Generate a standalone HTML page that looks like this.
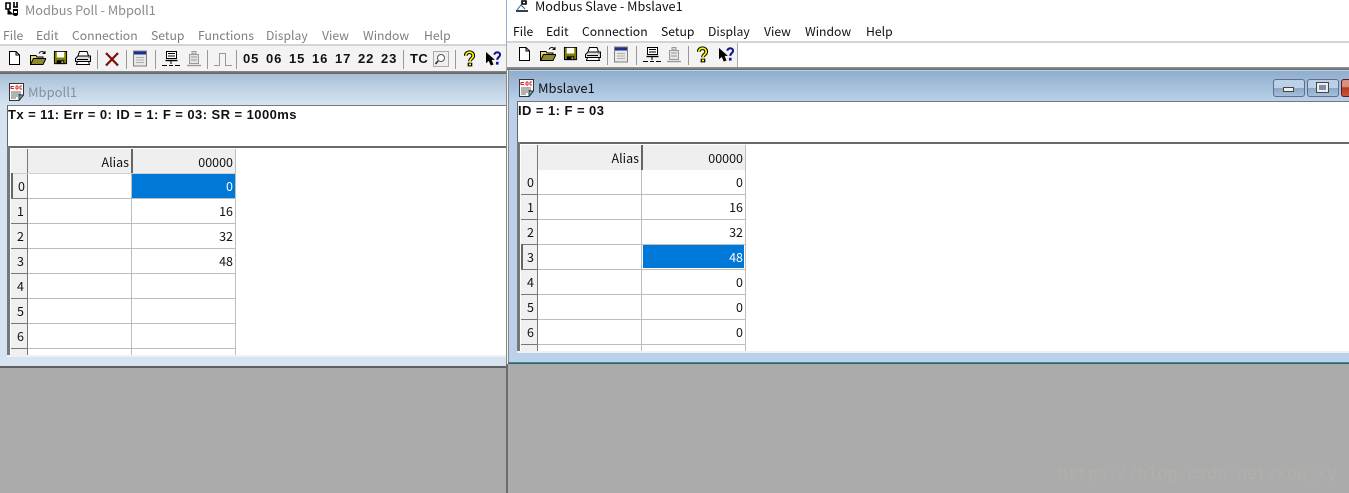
<!DOCTYPE html>
<html><head><meta charset="utf-8">
<style>
html,body{margin:0;padding:0}
body{width:1349px;height:493px;position:relative;overflow:hidden;background:#ababab;font-family:"Noto Sans CJK SC","Liberation Sans",sans-serif;}
.a{position:absolute}
.t{position:absolute;white-space:nowrap;line-height:16px;height:16px}
.m{font-size:12.2px;color:#7f7f7f}
.n{font-size:12.2px;color:#111}
.b{font-family:"Liberation Sans",sans-serif;font-weight:bold;font-size:13px;color:#111;letter-spacing:.44px}
.d{font-size:12.5px;color:#111;text-align:right}
.h{font-size:12.5px;color:#111;text-align:center}
.g{position:absolute;width:17px;height:1px;background:#777}
svg{position:absolute;overflow:visible}
</style></head>
<body>
<svg width="0" height="0" style="position:absolute">
<defs>
<symbol id="new" viewBox="0 0 16 16"><path d="M3.5 1.5H10L13.5 5V14.5H3.5Z M10 1.5V5H13.5" fill="#fff" stroke="#000" stroke-width="1"/></symbol>
<symbol id="open" viewBox="0 0 16 16"><path d="M.5 14.5V5.5H6L7 7H13V14.5Z" fill="#e8d870" stroke="#000"/><path d="M.5 14.5L3.5 8.5H16L13 14.5Z" fill="#8f8a30" stroke="#000"/><path d="M9 3.5C10 1 13 1 14.5 3M15 1V3.5H12.5" fill="none" stroke="#000"/></symbol>
<symbol id="save" viewBox="0 0 16 16"><path d="M1.5 1.5H14.5V14.5H1.5Z" fill="#808000" stroke="#000"/><path d="M4 2H12V8H4Z" fill="#fff"/><path d="M4 11H12V15H4Z" fill="#000"/><path d="M9 12H11V14H9Z" fill="#aaa"/></symbol>
<symbol id="print" viewBox="0 0 16 16"><path d="M4.5 1.5H12L13.5 6H3Z" fill="#fff" stroke="#000"/><path d="M.5 8.5L3 6H15.5V11.5H.5Z" fill="#ddd" stroke="#000"/><path d="M2.5 11.5H13.5L14.5 14.5H1.5Z" fill="#fff" stroke="#000"/><path d="M2 9.5H13" stroke="#000"/><path d="M13 7.5h2" stroke="#b5a000"/></symbol>
<symbol id="x" viewBox="0 0 16 16"><path d="M2 2L14 14.5M14 2L2 14.5" stroke="#7f0d0d" stroke-width="2.2" fill="none"/></symbol>
<symbol id="win" viewBox="0 0 16 16"><path d="M1.5 .5H14.5V15.5H1.5Z" fill="#e8e8e8" stroke="#808080"/><path d="M2 1H14V4H2Z" fill="#1b2f8f"/><path d="M4 7H12M4 9.5H12M4 12H12" stroke="#b0b0b0"/></symbol>
<symbol id="conn" viewBox="0 0 18 18"><path d="M4.5 1.5H14.5V8.5H4.5Z" fill="#fff" stroke="#000"/><path d="M6 3.5H13M6 6H13" stroke="#000"/><path d="M3.5 10.5H15.5" stroke="#000" stroke-width="1.4"/><path d="M9 11V14M0 15.5H5M7 15.5H11M13 15.5H18" stroke="#000"/></symbol>
<symbol id="disc" viewBox="0 0 18 18"><path d="M7 1.5H11V4H7Z" fill="#ddd" stroke="#999"/><path d="M4.5 4.5H13.5V13.5H4.5Z" fill="#e4e4e4" stroke="#999"/><path d="M6 7H12M6 10H12" stroke="#999"/><path d="M2 15.5H16" stroke="#999" stroke-width="1.4"/></symbol>
<symbol id="pulse" viewBox="0 0 18 14"><path d="M0 13.5H5.5V1.5H11.5V13.5H18" fill="none" stroke="#999"/></symbol>
<symbol id="help" viewBox="0 0 14 18"><path d="M3 6C3 1 11 1 11 6C11 9 7.5 9 7.5 12" fill="none" stroke="#000" stroke-width="4"/><path d="M3 6C3 1 11 1 11 6C11 9 7.5 9 7.5 12" fill="none" stroke="#ff0" stroke-width="1.8"/><rect x="5" y="13.5" width="5" height="4" fill="#000"/><rect x="6.3" y="14.4" width="2.4" height="2" fill="#ff0"/></symbol>
<symbol id="what" viewBox="0 0 16 16"><path d="M0 1V13L3 10.5L5 15.5L8 14.5L6 9.5H9.5Z" fill="#000"/><path d="M9 4C9 .5 15 .5 15 4C15 6.5 12 6.5 12 9.5" fill="none" stroke="#15158f" stroke-width="2.2"/><rect x="10.6" y="11.5" width="2.8" height="3" fill="#15158f"/></symbol>
<symbol id="doc" viewBox="0 0 16 18"><path d="M1.5 .5H15.5V12L11 17.5H1.5Z" fill="#fff" stroke="#333"/><path d="M3 3.5H6M3 5.5H6M3 3V6M8 3V6M10 3V6M8 3H10M8 6H10M12 3H14M12 6H14M12 3V6" stroke="#d22" fill="none"/><path d="M3 9H13M3 11H13M3 13H10M3 15H8" stroke="#666"/><path d="M11 17.5V12H15.5Z" fill="#5bb" stroke="#333"/></symbol>
<symbol id="zoom" viewBox="0 0 16 16"><path d="M.5 .5H15.5V15.5H.5Z" fill="#eee" stroke="#aaa"/><circle cx="8" cy="7" r="3.5" fill="#fff" stroke="#555"/><path d="M5 10L2.5 13" stroke="#222" stroke-width="1.5"/></symbol>
</defs>
</svg>

<!-- LEFT WINDOW -->
<div class="a" style="left:0;top:0;width:506px;height:47px;background:#fff"></div>
<svg style="left:4px;top:2px" width="17" height="15" viewBox="0 0 17 15"><path d="M2 1H6V7H2Z M10 0V5M13 0V5M9 5H14" fill="none" stroke="#000" stroke-width="1.6"/><path d="M4 7V12H9" stroke="#000"/><path d="M9 7H14V12Q14 14 11.5 14T9 12Z" fill="#000"/><rect x="10" y="9" width="3" height="2" fill="#fff"/></svg>
<div class="t m" style="left:25px;top:2px;font-size:12.7px;color:#8a8a8a">Modbus Poll - Mbpoll1</div>
<div class="t m" style="left:3px;top:27px">File</div>
<div class="t m" style="left:36px;top:27px">Edit</div>
<div class="t m" style="left:72px;top:27px">Connection</div>
<div class="t m" style="left:151px;top:27px">Setup</div>
<div class="t m" style="left:198px;top:27px">Functions</div>
<div class="t m" style="left:266px;top:27px">Display</div>
<div class="t m" style="left:322px;top:27px">View</div>
<div class="t m" style="left:363px;top:27px">Window</div>
<div class="t m" style="left:424px;top:27px">Help</div>
<div class="a" style="left:0;top:44px;width:506px;height:2px;background:#d4d4d4"></div>
<div class="a" style="left:0;top:46px;width:506px;height:25px;background:#f3f3f3"></div>
<div class="a" style="left:0;top:71px;width:506px;height:3px;background:linear-gradient(#8a8a8a,#5f5f5f)"></div>
<svg style="left:6px;top:50px" width="16" height="16"><use href="#new"/></svg>
<svg style="left:30px;top:50px" width="16" height="16"><use href="#open"/></svg>
<svg style="left:53px;top:50px" width="15" height="15"><use href="#save"/></svg>
<svg style="left:75px;top:50px" width="16" height="16"><use href="#print"/></svg>
<div class="a" style="left:97px;top:50px;width:1px;height:19px;background:#999"></div>
<svg style="left:104px;top:51px" width="16" height="16"><use href="#x"/></svg>
<div class="a" style="left:126px;top:50px;width:1px;height:19px;background:#999"></div>
<svg style="left:132px;top:50px" width="16" height="17"><use href="#win"/></svg>
<div class="a" style="left:155px;top:50px;width:1px;height:19px;background:#999"></div>
<svg style="left:162px;top:50px" width="18" height="18"><use href="#conn"/></svg>
<svg style="left:185px;top:50px" width="18" height="18"><use href="#disc"/></svg>
<div class="a" style="left:207px;top:50px;width:1px;height:19px;background:#999"></div>
<svg style="left:214px;top:52px" width="18" height="14"><use href="#pulse"/></svg>
<div class="a" style="left:236px;top:50px;width:1px;height:19px;background:#999"></div>
<div class="t b" style="left:243px;top:51px;letter-spacing:.9px">05</div>
<div class="t b" style="left:266px;top:51px;letter-spacing:.9px">06</div>
<div class="t b" style="left:289px;top:51px;letter-spacing:.9px">15</div>
<div class="t b" style="left:312px;top:51px;letter-spacing:.9px">16</div>
<div class="t b" style="left:335px;top:51px;letter-spacing:.9px">17</div>
<div class="t b" style="left:358px;top:51px;letter-spacing:.9px">22</div>
<div class="t b" style="left:381px;top:51px;letter-spacing:.9px">23</div>
<div class="a" style="left:403px;top:50px;width:1px;height:19px;background:#999"></div>
<div class="t b" style="left:410px;top:51px">TC</div>
<svg style="left:433px;top:51px" width="16" height="16"><use href="#zoom"/></svg>
<div class="a" style="left:455px;top:50px;width:1px;height:19px;background:#999"></div>
<svg style="left:463px;top:50px" width="13" height="17"><use href="#help"/></svg>
<svg style="left:486px;top:51px" width="15" height="15"><use href="#what"/></svg>

<!-- left child -->
<div class="a" style="left:0;top:74px;width:506px;height:292px;background:#d6e4f2"></div>
<div class="a" style="left:0;top:74px;width:506px;height:31px;background:linear-gradient(#a9c0d6,#d7e4f2)"></div>
<svg style="left:8px;top:83px" width="16" height="18"><use href="#doc"/></svg>
<div class="t m" style="left:28px;top:84px;color:#8593a0;font-size:13px">Mbpoll1</div>
<div class="a" style="left:7px;top:105px;width:499px;height:41px;background:#fff;border-left:1px solid #666;border-top:1px solid #777"></div>
<div class="t b" style="left:8px;top:107px">Tx = 11: Err = 0: ID = 1: F = 03: SR = 1000ms</div>
<div class="a" style="left:7px;top:146px;width:499px;height:211px;background:#fff"></div>
<div class="a" style="left:7px;top:146px;width:499px;height:2px;background:#6a6a6a"></div>
<div class="a" style="left:7px;top:146px;width:3px;height:210px;background:#777"></div>
<!-- grid left -->
<div class="a" style="left:11px;top:149px;width:224px;height:24px;background:#efefef"></div>
<div class="a" style="left:11px;top:149px;width:17px;height:206px;background:#f0f0f0"></div>
<div class="a" style="left:131px;top:149px;width:2px;height:24px;background:#666"></div>
<div class="a" style="left:27px;top:149px;width:1px;height:206px;background:#777"></div>
<div class="a" style="left:11px;top:173px;width:224px;height:1px;background:#d0d0d0"></div>
<div class="a" style="left:131px;top:173px;width:1px;height:182px;background:#bdbdbd"></div>
<div class="a" style="left:235px;top:149px;width:1px;height:206px;background:#bdbdbd"></div>
<div class="a" style="left:11px;top:198px;width:225px;height:1px;background:#bdbdbd"></div>
<div class="a" style="left:11px;top:223px;width:225px;height:1px;background:#bdbdbd"></div>
<div class="a" style="left:11px;top:248px;width:225px;height:1px;background:#bdbdbd"></div>
<div class="a" style="left:11px;top:273px;width:225px;height:1px;background:#bdbdbd"></div>
<div class="a" style="left:11px;top:298px;width:225px;height:1px;background:#bdbdbd"></div>
<div class="a" style="left:11px;top:323px;width:225px;height:1px;background:#bdbdbd"></div>
<div class="a" style="left:11px;top:348px;width:225px;height:1px;background:#bdbdbd"></div>
<div class="g" style="left:11px;top:198px"></div><div class="g" style="left:11px;top:223px"></div><div class="g" style="left:11px;top:248px"></div><div class="g" style="left:11px;top:273px"></div><div class="g" style="left:11px;top:298px"></div><div class="g" style="left:11px;top:323px"></div><div class="g" style="left:11px;top:348px"></div>
<div class="a" style="left:11px;top:173px;width:2px;height:25px;background:#666"></div>
<div class="a" style="left:132px;top:174px;width:103px;height:24px;background:#0078d7"></div>
<div class="t d" style="left:60px;width:69px;top:154px">Alias</div>
<div class="t d" style="left:140px;width:93px;top:154px">00000</div>
<div class="t h" style="left:13px;width:17px;top:178px">0</div>
<div class="t h" style="left:12px;width:17px;top:203px">1</div>
<div class="t h" style="left:12px;width:17px;top:228px">2</div>
<div class="t h" style="left:12px;width:17px;top:253px">3</div>
<div class="t h" style="left:12px;width:17px;top:278px">4</div>
<div class="t h" style="left:12px;width:17px;top:303px">5</div>
<div class="t h" style="left:12px;width:17px;top:328px">6</div>
<div class="t d" style="left:140px;width:93px;top:178px;color:#fff">0</div>
<div class="t d" style="left:140px;width:93px;top:203px">16</div>
<div class="t d" style="left:140px;width:93px;top:228px">32</div>
<div class="t d" style="left:140px;width:93px;top:253px">48</div>
<div class="a" style="left:7px;top:355px;width:499px;height:2px;background:#f0f0f0"></div>
<div class="a" style="left:0;top:357px;width:506px;height:9px;background:#d6e4f2"></div>
<div class="a" style="left:0;top:366px;width:506px;height:2px;background:#5f5f5f"></div>

<!-- RIGHT WINDOW -->
<div class="a" style="left:506px;top:364px;width:2px;height:129px;background:#6c6c6c"></div>
<div class="a" style="left:506px;top:70px;width:1px;height:294px;background:#888"></div>
<div class="a" style="left:507px;top:70px;width:1px;height:294px;background:#f4f4f4"></div>
<div class="a" style="left:506px;top:0;width:843px;height:43px;background:#fff;border-left:1px solid #8fb3d0;box-sizing:border-box"></div>
<svg style="left:514px;top:0" width="16" height="13" viewBox="0 0 16 13"><path d="M8 1H12V4H8Z M2 11H14" stroke="#000" stroke-width="1.6" fill="none"/><path d="M3 10L7 5L11 9" stroke="#16a" fill="none"/></svg>
<div class="t n" style="left:535px;top:-2px;font-size:12.7px">Modbus Slave - Mbslave1</div>
<div class="t n" style="left:513px;top:23px">File</div>
<div class="t n" style="left:546px;top:23px">Edit</div>
<div class="t n" style="left:582px;top:23px">Connection</div>
<div class="t n" style="left:661px;top:23px">Setup</div>
<div class="t n" style="left:708px;top:23px">Display</div>
<div class="t n" style="left:764px;top:23px">View</div>
<div class="t n" style="left:805px;top:23px">Window</div>
<div class="t n" style="left:866px;top:23px">Help</div>
<div class="a" style="left:507px;top:41px;width:842px;height:2px;background:#d4d4d4"></div>
<div class="a" style="left:507px;top:43px;width:231px;height:24px;background:#f3f3f3;border-right:1px solid #aaa;box-sizing:border-box"></div>
<div class="a" style="left:738px;top:43px;width:611px;height:24px;background:#fff"></div>
<div class="a" style="left:507px;top:67px;width:842px;height:3px;background:linear-gradient(#9a9a9a,#666)"></div>
<svg style="left:516px;top:46px" width="16" height="16"><use href="#new"/></svg>
<svg style="left:540px;top:46px" width="16" height="16"><use href="#open"/></svg>
<svg style="left:563px;top:46px" width="15" height="15"><use href="#save"/></svg>
<svg style="left:585px;top:46px" width="16" height="16"><use href="#print"/></svg>
<div class="a" style="left:607px;top:46px;width:1px;height:19px;background:#999"></div>
<svg style="left:613px;top:46px" width="16" height="17"><use href="#win"/></svg>
<div class="a" style="left:636px;top:46px;width:1px;height:19px;background:#999"></div>
<svg style="left:643px;top:46px" width="18" height="18"><use href="#conn"/></svg>
<svg style="left:665px;top:46px" width="18" height="18"><use href="#disc"/></svg>
<div class="a" style="left:688px;top:46px;width:1px;height:19px;background:#999"></div>
<svg style="left:696px;top:46px" width="13" height="17"><use href="#help"/></svg>
<svg style="left:719px;top:47px" width="15" height="15"><use href="#what"/></svg>

<!-- right child -->
<div class="a" style="left:508px;top:70px;width:841px;height:292px;background:#b9d1ea;border-left:1px solid #888;box-sizing:border-box"></div>
<div class="a" style="left:509px;top:71px;width:840px;height:30px;background:linear-gradient(#8fadcc,#b9d1ea)"></div>
<svg style="left:518px;top:79px" width="16" height="18"><use href="#doc"/></svg>
<div class="t n" style="left:538px;top:80px;font-size:13px">Mbslave1</div>
<div class="a" style="left:1273px;top:79px;width:32px;height:18px;box-sizing:border-box;border:1px solid #5c6f8c;border-radius:3px;background:linear-gradient(#bcd0e6 50%,#8aa6c6 50%,#a6bfdb)"></div>
<div class="a" style="left:1283px;top:87px;width:11px;height:5px;box-sizing:border-box;background:#eee;border:1px solid #444"></div>
<div class="a" style="left:1307px;top:79px;width:32px;height:18px;box-sizing:border-box;border:1px solid #5c6f8c;border-radius:3px;background:linear-gradient(#bcd0e6 50%,#8aa6c6 50%,#a6bfdb)"></div>
<div class="a" style="left:1317px;top:83px;width:11px;height:9px;box-sizing:border-box;background:#7f8cb0;border:2px solid #eee;outline:1px solid #444"></div>
<div class="a" style="left:1341px;top:79px;width:8px;height:18px;box-sizing:border-box;border:1px solid #5a1a1a;border-right:0;border-radius:3px 0 0 3px;background:linear-gradient(#d9917f 40%,#b63a20 50%,#c9563a)"></div>
<div class="a" style="left:517px;top:101px;width:832px;height:41px;background:#fff;border-left:1px solid #666;border-top:1px solid #777;box-sizing:border-box"></div>
<div class="t b" style="left:518px;top:103px">ID = 1: F = 03</div>
<div class="a" style="left:517px;top:143px;width:832px;height:210px;background:#fff"></div>
<div class="a" style="left:517px;top:142px;width:832px;height:2px;background:#6a6a6a"></div>
<div class="a" style="left:517px;top:142px;width:3px;height:209px;background:#777"></div>
<!-- grid right -->
<div class="a" style="left:521px;top:145px;width:224px;height:25px;background:#efefef"></div>
<div class="a" style="left:521px;top:145px;width:17px;height:206px;background:#f0f0f0"></div>
<div class="a" style="left:641px;top:145px;width:2px;height:25px;background:#666"></div>
<div class="a" style="left:537px;top:145px;width:1px;height:206px;background:#777"></div>
<div class="a" style="left:641px;top:170px;width:1px;height:181px;background:#bdbdbd"></div>
<div class="a" style="left:745px;top:145px;width:1px;height:206px;background:#bdbdbd"></div>
<div class="a" style="left:521px;top:194px;width:225px;height:1px;background:#bdbdbd"></div>
<div class="a" style="left:521px;top:219px;width:225px;height:1px;background:#bdbdbd"></div>
<div class="a" style="left:521px;top:244px;width:225px;height:1px;background:#bdbdbd"></div>
<div class="a" style="left:521px;top:269px;width:225px;height:1px;background:#bdbdbd"></div>
<div class="a" style="left:521px;top:294px;width:225px;height:1px;background:#bdbdbd"></div>
<div class="a" style="left:521px;top:319px;width:225px;height:1px;background:#bdbdbd"></div>
<div class="a" style="left:521px;top:344px;width:225px;height:1px;background:#bdbdbd"></div>
<div class="g" style="left:521px;top:194px"></div><div class="g" style="left:521px;top:219px"></div><div class="g" style="left:521px;top:244px"></div><div class="g" style="left:521px;top:269px"></div><div class="g" style="left:521px;top:294px"></div><div class="g" style="left:521px;top:319px"></div><div class="g" style="left:521px;top:344px"></div>
<div class="a" style="left:521px;top:244px;width:2px;height:25px;background:#666"></div>
<div class="a" style="left:643px;top:245px;width:101px;height:23px;background:#0078d7"></div>
<div class="t d" style="left:570px;width:69px;top:150px">Alias</div>
<div class="t d" style="left:650px;width:93px;top:150px">00000</div>
<div class="t h" style="left:522px;width:17px;top:174px">0</div>
<div class="t h" style="left:522px;width:17px;top:199px">1</div>
<div class="t h" style="left:522px;width:17px;top:224px">2</div>
<div class="t h" style="left:522px;width:17px;top:249px">3</div>
<div class="t h" style="left:522px;width:17px;top:274px">4</div>
<div class="t h" style="left:522px;width:17px;top:299px">5</div>
<div class="t h" style="left:522px;width:17px;top:324px">6</div>
<div class="t d" style="left:650px;width:93px;top:174px">0</div>
<div class="t d" style="left:650px;width:93px;top:199px">16</div>
<div class="t d" style="left:650px;width:93px;top:224px">32</div>
<div class="t d" style="left:650px;width:93px;top:249px;color:#fff">48</div>
<div class="t d" style="left:650px;width:93px;top:274px">0</div>
<div class="t d" style="left:650px;width:93px;top:299px">0</div>
<div class="t d" style="left:650px;width:93px;top:324px">0</div>
<div class="a" style="left:517px;top:351px;width:832px;height:2px;background:#f0f0f0"></div>
<div class="a" style="left:509px;top:353px;width:840px;height:9px;background:#b9d1ea"></div>
<div class="a" style="left:508px;top:362px;width:841px;height:1px;background:#1d9aa5"></div>
<div class="a" style="left:508px;top:363px;width:841px;height:1px;background:#555"></div>

<div class="t" style="left:1058px;top:466px;height:18px;line-height:18px;font-family:'Liberation Mono',monospace;font-size:16.5px;letter-spacing:.05px;color:#b1b1a7">https://blog.csdn.net/xuw_xy</div>
</body></html>
